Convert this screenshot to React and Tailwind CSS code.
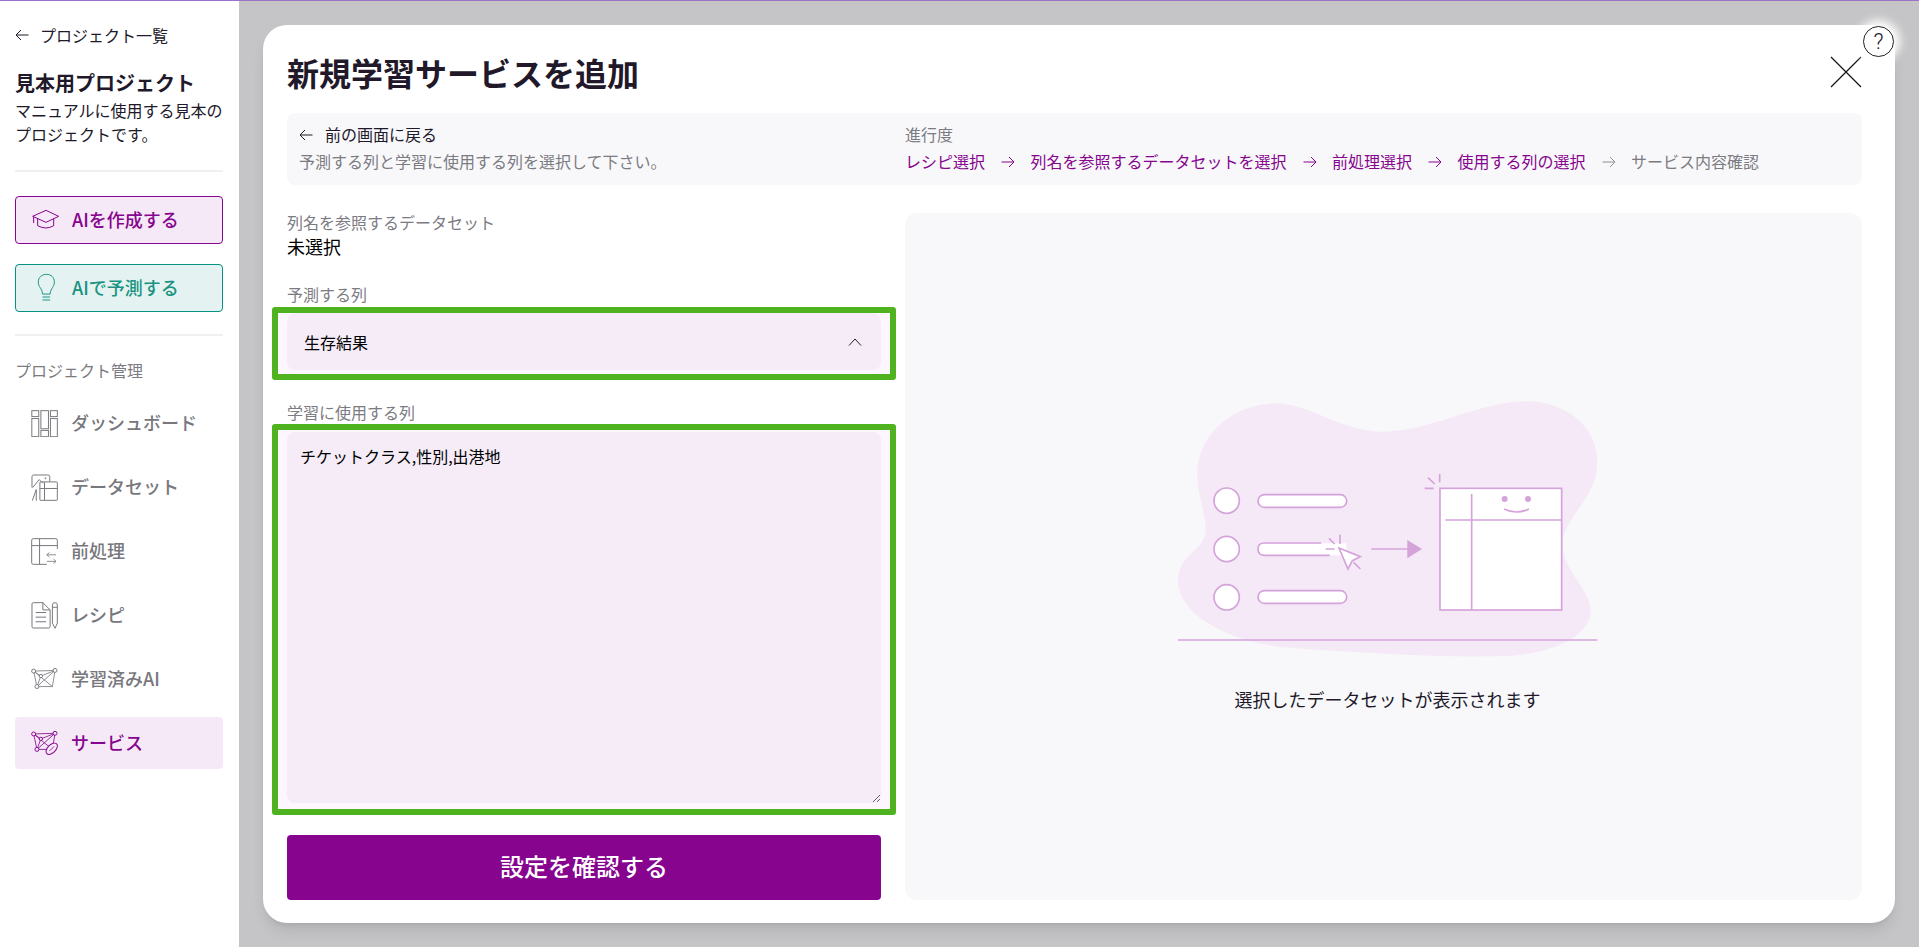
import { useState } from "react";

const Arrow = ({ dir = "right", className = "" }) => (
  <svg width="14" height="12" viewBox="0 0 14 12" fill="none" stroke="currentColor" strokeWidth="1" className={`shrink-0 ${className}`}>
    {dir === "right" ? <path d="M0.5 6H13M8 1l5 5-5 5" /> : <path d="M13.5 6H1M6 1L1 6l5 5" />}
  </svg>
);

const Icon = ({ box, w = 27, h = 27, children }) => (
  <svg width={w} height={h} viewBox={box} fill="none" stroke="currentColor" strokeWidth="3" className="shrink-0">
    {children}
  </svg>
);

const NetNodes = ({ cy, fill = "#fff" }) => (
  <>
    <path d={`M100 ${cy}L165 ${cy - 2}L157 ${cy + 47}H110ZM100 ${cy}L157 ${cy + 47}M165 ${cy - 2}L110 ${cy + 47}M122 ${cy + 15}L165 ${cy - 2}M122 ${cy + 15}L110 ${cy + 47}M122 ${cy + 15}L100 ${cy}`} strokeWidth="2.5" />
    <circle cx="100" cy={cy} r="6" fill={fill} />
    <circle cx="165" cy={cy - 2} r="6" fill={fill} />
    <circle cx="110" cy={cy + 47} r="6" fill={fill} />
    <circle cx="122" cy={cy + 15} r="5" fill={fill} />
  </>
);

const menu = [
  {
    name: "ダッシュボード",
    icon: (
      <Icon box="92 89 82 82">
        <rect x="94.5" y="91" width="21" height="18" />
        <rect x="94.5" y="115" width="21" height="55" />
        <rect x="122" y="91" width="23" height="55" />
        <rect x="122" y="151" width="23" height="19" />
        <rect x="151" y="91" width="21" height="18" />
        <rect x="151" y="115" width="21" height="55" />
      </Icon>
    ),
  },
  {
    name: "データセット",
    icon: (
      <Icon box="92 281 82 82">
        <path d="M95 322V289Q95 284 100 284H143Q149 284 149 289V304" />
        <path d="M97 322L117 298L128 309" />
        <circle cx="136" cy="294" r="1.5" />
        <path d="M96 362L108 328V362" />
        <rect x="119" y="305" width="53" height="56" rx="2" />
        <path d="M133 305V361M119 325H172" />
      </Icon>
    ),
  },
  {
    name: "前処理",
    icon: (
      <Icon box="92 474 82 82">
        <path d="M172 507V481Q172 476 167 476H99Q94 476 94 481V549Q94 554 99 554H140" />
        <path d="M94 497H172M118 476V554" />
        <path d="M168 525H140M148 518L140 525L148 532M140 545H168M160 538L168 545L160 552" strokeWidth="2.5" />
      </Icon>
    ),
  },
  {
    name: "レシピ",
    icon: (
      <Icon box="92 666 82 82">
        <path d="M95 672Q95 668 99 668H128L150 690V740Q150 745 146 745H99Q95 745 95 740Z" />
        <path d="M128 668V690H150M106 698H138M106 712H138M106 726H138" />
        <path d="M157 675Q157 668 165 668Q172 668 172 675V730L165 746L157 730ZM157 682H172" />
      </Icon>
    ),
  },
  {
    name: "学習済みAI",
    icon: (
      <Icon box="92 866 82 66" h={22}>
        <NetNodes cy={875} />
      </Icon>
    ),
  },
  {
    name: "サービス",
    active: true,
    icon: (
      <Icon box="92 1056 82 76" h={25}>
        <NetNodes cy={1065} fill="#f5e9f7" />
        <ellipse cx="155" cy="1110" rx="21" ry="12" transform="rotate(-45 155 1110)" fill="#f5e9f7" />
        <path d="M148 1117L162 1103" strokeWidth="2.5" />
      </Icon>
    ),
  },
];

const steps = [
  { label: "レシピ選択", done: true },
  { label: "列名を参照するデータセットを選択", done: true },
  { label: "前処理選択", done: true },
  { label: "使用する列の選択", done: true },
  { label: "サービス内容確認", done: false },
];

const Illustration = () => (
  <svg width="424" height="260" viewBox="80 55 1270 780" fill="none" stroke="#d4a3da" strokeWidth="5">
    <path
      d="M375 68C480 68 570 150 690 153C830 156 960 75 1110 62C1240 55 1345 130 1343 250C1342 340 1260 400 1240 470C1225 560 1322 620 1323 690C1322 770 1200 825 1040 827C880 832 600 815 400 800C230 780 85 700 85 600C85 520 165 510 168 450C168 390 140 340 143 270C150 150 260 70 375 68Z"
      fill="#f5e9f7"
      stroke="none"
    />
    <circle cx="231" cy="360" r="38" fill="#fff" />
    <circle cx="231" cy="505" r="38" fill="#fff" />
    <circle cx="231" cy="650" r="38" fill="#fff" />
    <rect x="325" y="342" width="266" height="38" rx="19" fill="#fff" />
    <rect x="325" y="630" width="266" height="38" rx="19" fill="#fff" />
    <rect x="345" y="488" width="245" height="36" fill="#fff" stroke="none" />
    <path d="M515 487H344Q325 487 325 505Q325 524 344 524H540" fill="#fff" />
    <path d="M568 502L632 528L608 540L595 565ZM612 545L632 565" fill="#fff" />
    <path d="M528 505H555M538 473L555 490M571 462V490" />
    <path d="M665 505H775" />
    <path d="M773 478L817 505L773 533Z" fill="#d4a3da" stroke="none" />
    <rect x="871" y="323" width="365" height="365" fill="#fff" />
    <path d="M966 340V688M887 418H1236M835 291L855 310M870 280V305M825 323H852M1063 385Q1100 403 1138 385" />
    <circle cx="1065" cy="355" r="9" fill="#d4a3da" stroke="none" />
    <circle cx="1135" cy="355" r="9" fill="#d4a3da" stroke="none" />
    <path d="M85 778H1343" strokeWidth="4" />
  </svg>
);

export default function App() {
  const [columns, setColumns] = useState("チケットクラス,性別,出港地");

  return (
    <div className="h-[947px] overflow-hidden bg-[#c5c5c7] border-t border-[#9a72c8] flex font-['Noto_Sans_CJK_JP','Noto_Sans',sans-serif] text-[#21182a]">
      {/* Sidebar */}
      <aside className="w-[239px] shrink-0 bg-white pl-[15px] pr-[16px] pt-[22px]">
        <a className="flex items-center h-6 gap-[11px] text-base">
          <Arrow dir="left" />
          <span>プロジェクト一覧</span>
        </a>
        <h2 className="mt-[21px] text-[20px] leading-[30px] font-bold">見本用プロジェクト</h2>
        <p className="mt-[1px] text-base leading-[23.5px]">
          マニュアルに使用する見本の
          <br />
          プロジェクトです。
        </p>
        <div className="mt-[24px] h-[2px] bg-[#f0f0f2]"></div>

        <a className="mt-6 flex items-center h-12 pl-4 pb-[2px] gap-[12px] border border-[#87048f] rounded bg-[#f5e9f7] text-[#87048f] text-[18px] font-medium">
          <Icon box="20 28 84 60" w={28} h={20}>
            <path d="M62 32L22 50L62 68L100 50ZM37 57V78Q62 92 85 78V57M25 51V70" />
          </Icon>
          AIを作成する
        </a>
        <a className="mt-5 flex items-center h-12 pl-4 pb-[2px] gap-[12px] border border-[#07917f] rounded bg-[#e4f3f1] text-[#1a9382] text-[18px] font-medium">
          <span className="w-[28px] flex justify-center">
            <Icon box="30 218 64 88" w={21} h={29}>
              <path d="M50 282C48 262 37 262 37 245C37 231 48 222 62 222C76 222 86 231 86 245C86 262 75 262 73 282ZM50 291H73M50 300H73" />
            </Icon>
          </span>
          AIで予測する
        </a>
        <div className="mt-[22px] h-[2px] bg-[#f0f0f2]"></div>

        <p className="mt-[23px] h-6 leading-[22px] text-base text-[#7b7b82]">プロジェクト管理</p>
        <nav className="mt-[14px] flex flex-col gap-3">
          {menu.map((item) => (
            <a
              key={item.name}
              className={`flex items-center h-[52px] pl-4 gap-[13px] rounded text-[18px] font-medium ${
                item.active ? "bg-[#f5e9f7] text-[#87048f]" : "text-[#77777d]"
              }`}
            >
              {item.icon}
              <span className="pb-[2px]">{item.name}</span>
            </a>
          ))}
        </nav>
      </aside>

      {/* Modal */}
      <main className="flex-1 pl-6 pr-6 pt-6">
        <div className="relative h-[898px] bg-white rounded-3xl shadow-lg pl-6 pr-[33px] pt-[23px] pb-[23px] flex flex-col">
          <div className="absolute right-[1px] top-[1px] w-[31px] h-[31px] rounded-full bg-white border border-[#222] shadow-[0_0_10px_6px_#fff] flex items-center justify-center font-['Roboto',sans-serif] font-light text-[22px] leading-none">
            ?
          </div>

          <header className="flex items-center justify-between h-12">
            <h1 className="text-[32px] font-bold">新規学習サービスを追加</h1>
            <svg width="32" height="32" viewBox="0 0 32 32" stroke="#111" strokeWidth="1.2">
              <path d="M1 1L31 31M31 1L1 31" />
            </svg>
          </header>

          <div className="mt-[17px] h-[72px] shrink-0 rounded-lg bg-[#f8f8fa] flex items-center pb-[2px] text-base leading-[27px]">
            <div className="w-[618px] pl-3">
              <div className="flex items-center gap-[12px]">
                <Arrow dir="left" />
                <span>前の画面に戻る</span>
              </div>
              <p className="text-[#7b7b82]">予測する列と学習に使用する列を選択して下さい。</p>
            </div>
            <div>
              <p className="text-[#7b7b82]">進行度</p>
              <div className="flex items-center">
                {steps.map((step, idx) => (
                  <div key={step.label} className={`flex items-center ${step.done ? "text-[#87048f]" : "text-[#7b7b82]"}`}>
                    {idx > 0 && <Arrow className={`ml-[16px] mr-[15.5px] ${step.done ? "" : "text-[#8f8f95]"}`} />}
                    <span>{step.label}</span>
                  </div>
                ))}
              </div>
            </div>
          </div>

          <div className="mt-[26px] flex-1 min-h-0 flex gap-6">
            {/* Form */}
            <div className="w-[594px] shrink-0 flex flex-col text-base">
              <p className="h-6 leading-[22px] text-[#7b7b82]">列名を参照するデータセット</p>
              <p className="h-6 leading-[22px] text-[18px] text-black">未選択</p>

              <p className="mt-6 h-6 leading-[22px] text-[#7b7b82]">予測する列</p>
              <div className="-mx-[15px] border-[6px] border-[#4fb31f] rounded-[3px] bg-[#fdf7fd] px-[9px] pb-[4px]">
                <div className="h-[57px] rounded-lg bg-[#f5ecf8] flex items-center justify-between pl-[17px] pr-[19px] text-black">
                  <span>生存結果</span>
                  <svg width="14" height="8" viewBox="0 0 14 8" fill="none" stroke="#222" strokeWidth="1">
                    <path d="M1 7.5L7 1l6 6.5" />
                  </svg>
                </div>
              </div>

              <p className="mt-[21px] h-[23px] leading-[22px] text-[#7b7b82]">学習に使用する列</p>
              <div className="-mx-[15px] h-[391px] border-[6px] border-[#4fb31f] rounded-[3px] bg-[#fdf7fd] px-[9px] pt-[2px] pb-[6px]">
                <textarea
                  value={columns}
                  onChange={(e) => setColumns(e.target.value)}
                  className="block w-full h-full rounded-lg bg-[#f5ecf8] px-[13px] pt-[12px] pb-[13px] leading-6 text-black outline-none"
                />
              </div>

              <button className="mt-5 h-[65px] shrink-0 rounded bg-[#87048f] text-white text-2xl font-medium pb-[3px]">
                設定を確認する
              </button>
            </div>

            {/* Preview */}
            <div className="mt-[2px] flex-1 rounded-xl bg-[#f8f8fa] flex flex-col items-center justify-center pl-2">
              <Illustration />
              <p className="mt-[27px] mb-px text-[18px] leading-[27px]">選択したデータセットが表示されます</p>
            </div>
          </div>
        </div>
      </main>
    </div>
  );
}
